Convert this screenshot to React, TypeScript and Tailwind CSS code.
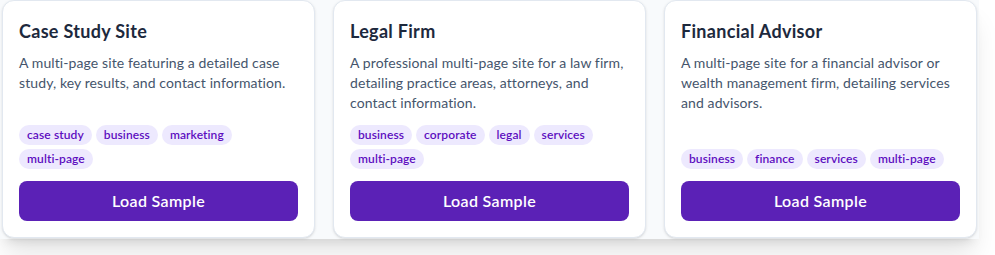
const samples = [
  {
    title: 'Case Study Site',
    description: 'A multi-page site featuring a detailed case study, key results, and contact information.',
    tags: ['case study', 'business', 'marketing', 'multi-page'],
  },
  {
    title: 'Legal Firm',
    description: 'A professional multi-page site for a law firm, detailing practice areas, attorneys, and contact information.',
    tags: ['business', 'corporate', 'legal', 'services', 'multi-page'],
  },
  {
    title: 'Financial Advisor',
    description: 'A multi-page site for a financial advisor or wealth management firm, detailing services and advisors.',
    tags: ['business', 'finance', 'services', 'multi-page'],
  },
];

function SampleCard({ title, description, tags }: { title: string; description: string; tags: string[] }) {
  return (
    <div className="flex flex-col rounded-xl border border-slate-200 bg-white p-4 shadow-sm">
      <h3 className="text-lg font-bold leading-7 tracking-[0.3px] text-slate-800">{title}</h3>
      <p className="mt-2 flex-1 text-sm leading-5 tracking-[0.1px] text-slate-600">{description}</p>
      <div className="mt-3 flex flex-wrap gap-1">
        {tags.map((tag) => (
          <span
            key={tag}
            className="rounded-full bg-violet-100 px-2 py-0.5 text-xs font-semibold leading-4 tracking-[0.1px] text-violet-800"
          >
            {tag}
          </span>
        ))}
      </div>
      <button
        type="button"
        className="mt-3 h-10 w-full rounded-lg bg-[#5b21b6] text-base font-semibold tracking-[0.35px] text-white"
      >
        Load Sample
      </button>
    </div>
  );
}

export default function App() {
  return (
    <div className="h-[255px] w-[995px] bg-white" style={{ fontFamily: 'Lato, "Noto Sans", sans-serif' }}>
      <div className="grid w-[979px] grid-cols-3 gap-[18px] bg-slate-50 px-[2px] pb-[1px] shadow-xl">
        {samples.map((s) => (
          <SampleCard key={s.title} {...s} />
        ))}
      </div>
    </div>
  );
}
